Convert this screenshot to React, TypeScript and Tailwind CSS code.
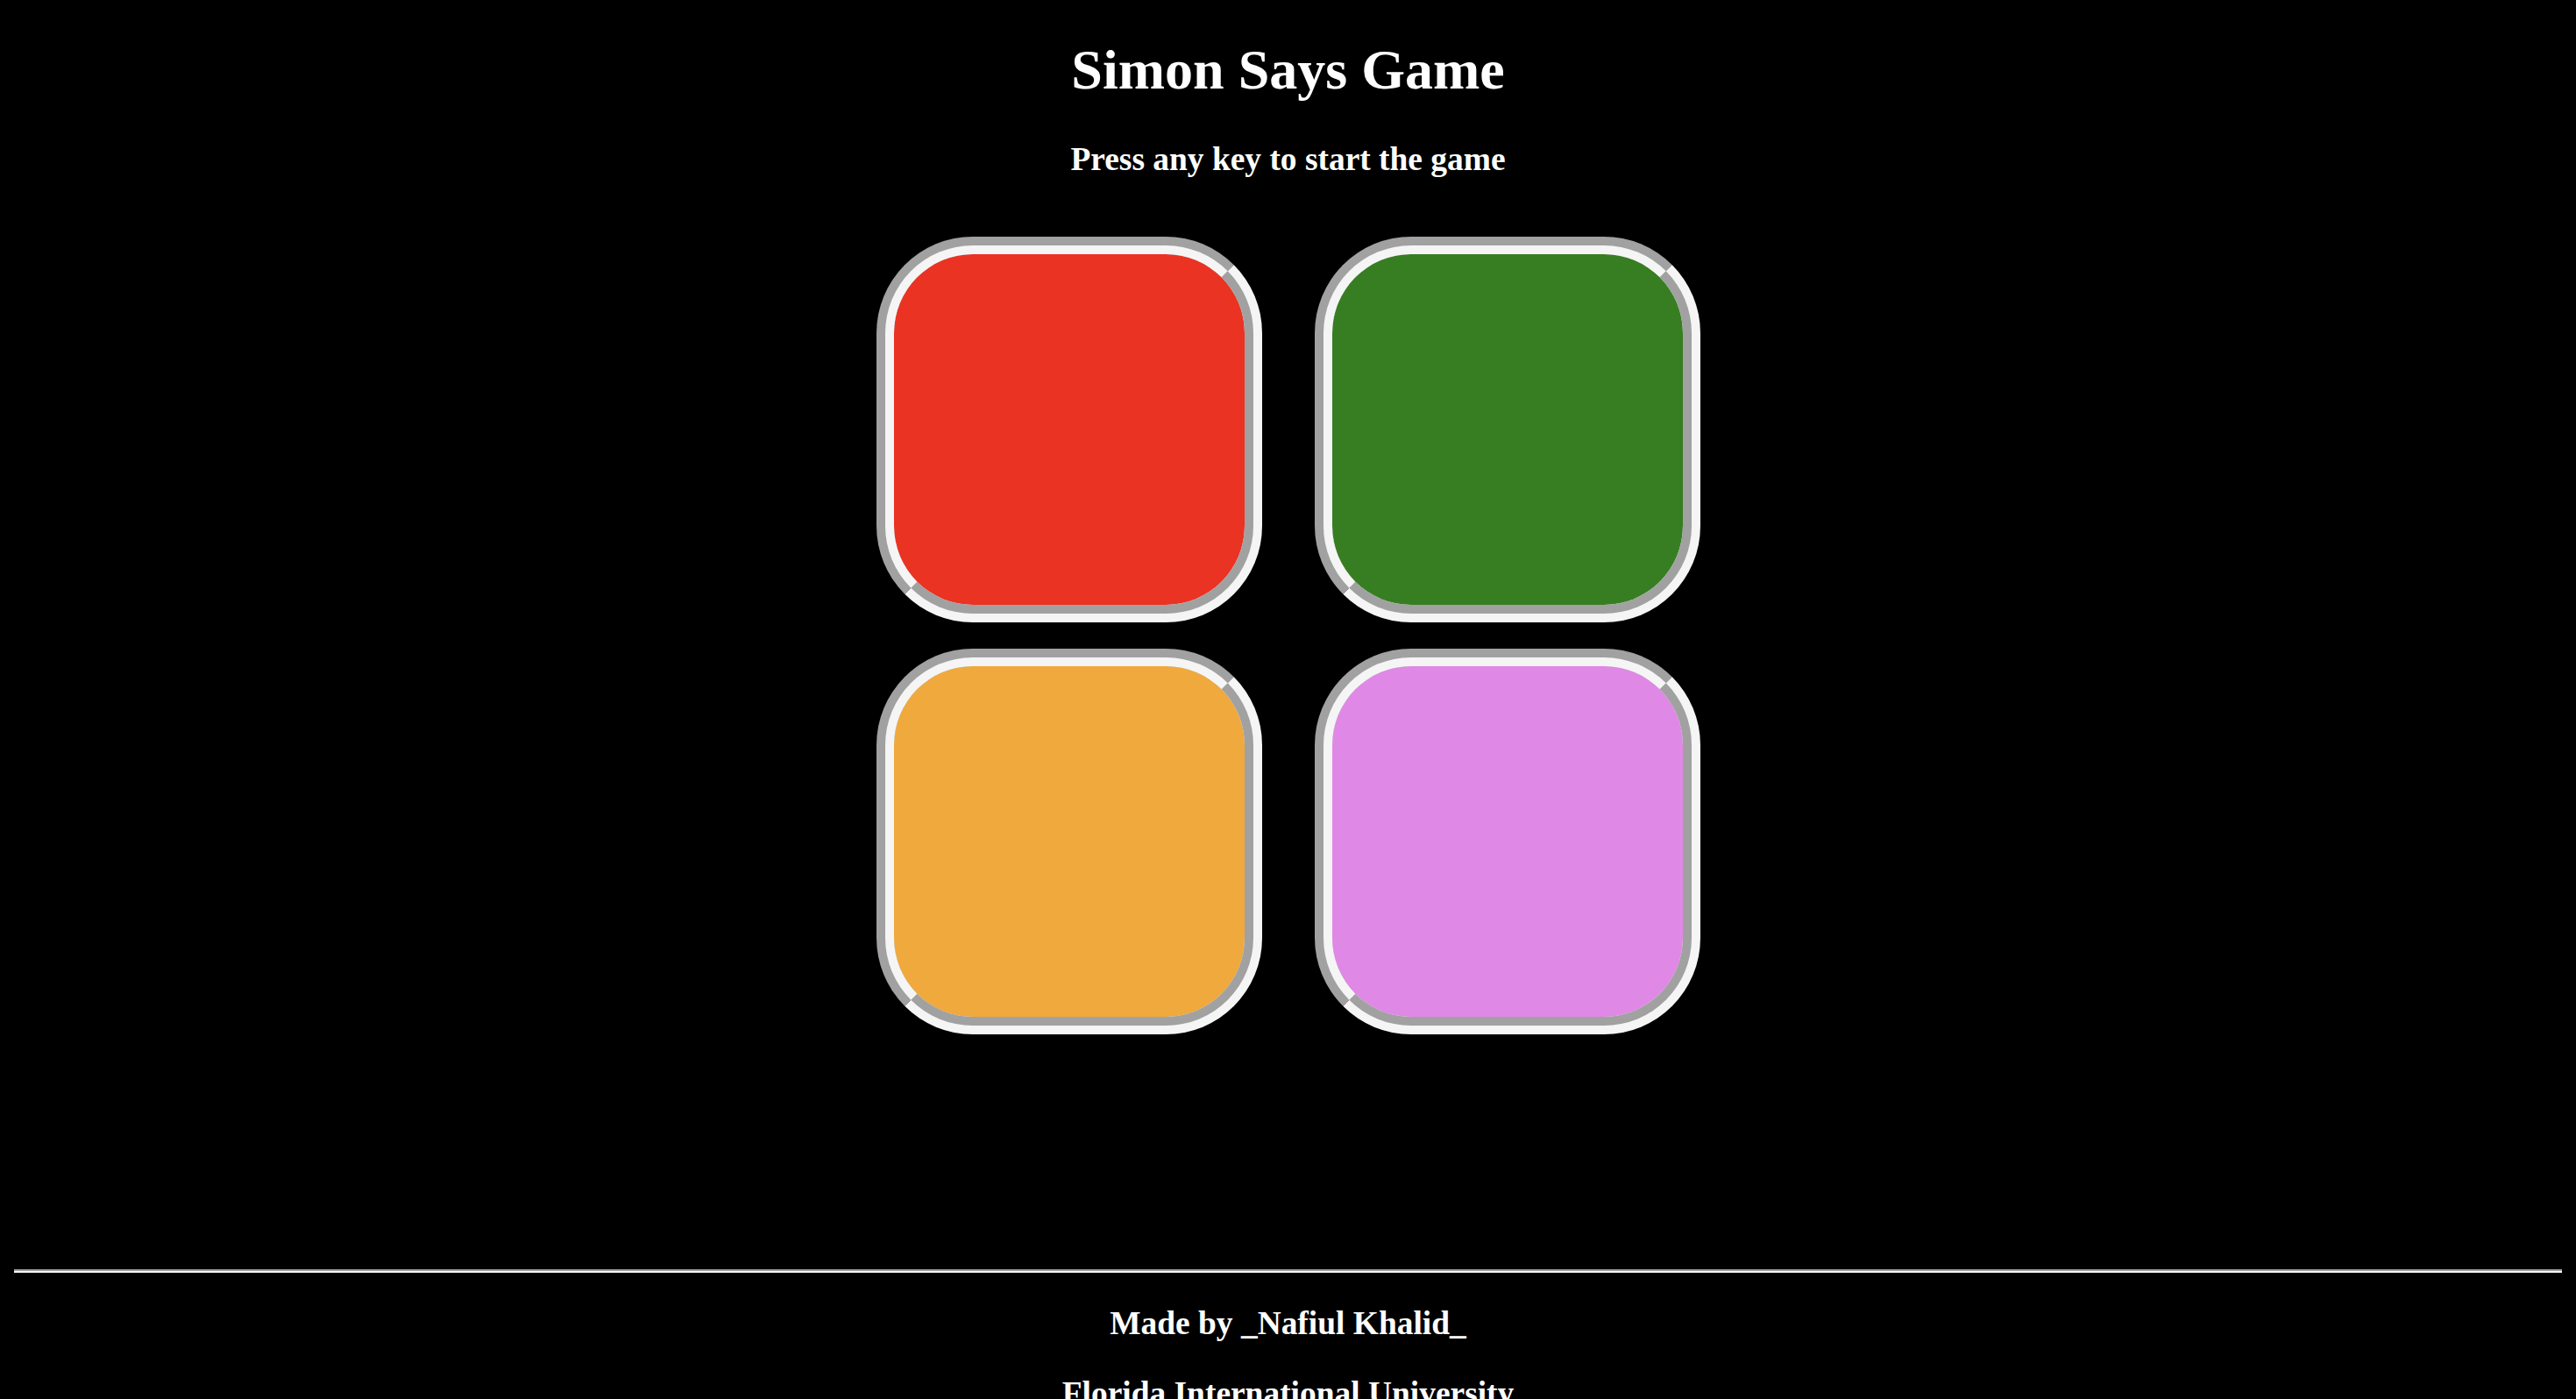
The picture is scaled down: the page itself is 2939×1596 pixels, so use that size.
import React from 'react';

const pads = [
  { id: 'red', color: 'bg-[#ea3323]' },
  { id: 'green', color: 'bg-[#377e22]' },
  { id: 'yellow', color: 'bg-[#f0a93c]' },
  { id: 'purple', color: 'bg-[#e088e6]' },
];

const App: React.FC = () => {
  return (
    <div className="min-h-screen bg-black text-white px-[16px] pt-[43px] font-['Liberation_Serif','Times_New_Roman',serif] font-bold text-center">
      {/* Header */}
      <h1 className="text-[64px] leading-[73.5px]">Simon Says Game</h1>
      <h3 className="mt-[43px] text-[37.44px] leading-[43px]">Press any key to start the game</h3>

      {/* Pads */}
      <div className="mt-[67.5px] mx-auto grid grid-cols-[440px_440px] gap-x-[60px] gap-y-[30px] w-[940px]">
        {pads.map((pad) => (
          <div
            key={pad.id}
            id={pad.id}
            className={`w-[440px] h-[440px] rounded-[25%] border-[20px] [border-style:groove] border-[#f5f5f5] ${pad.color}`}
          ></div>
        ))}
      </div>

      {/* Footer */}
      <hr className="mt-[268px] border-0 border-t-2 border-t-[#a0a0a0] border-b-2 border-b-[#f5f5f5]" />
      <h3 className="mt-[36px] text-[37.44px] leading-[43px]">Made by _Nafiul Khalid_</h3>
      <h3 className="mt-[37.44px] text-[37.44px] leading-[43px]">Florida International University</h3>
    </div>
  );
};

export default App;
